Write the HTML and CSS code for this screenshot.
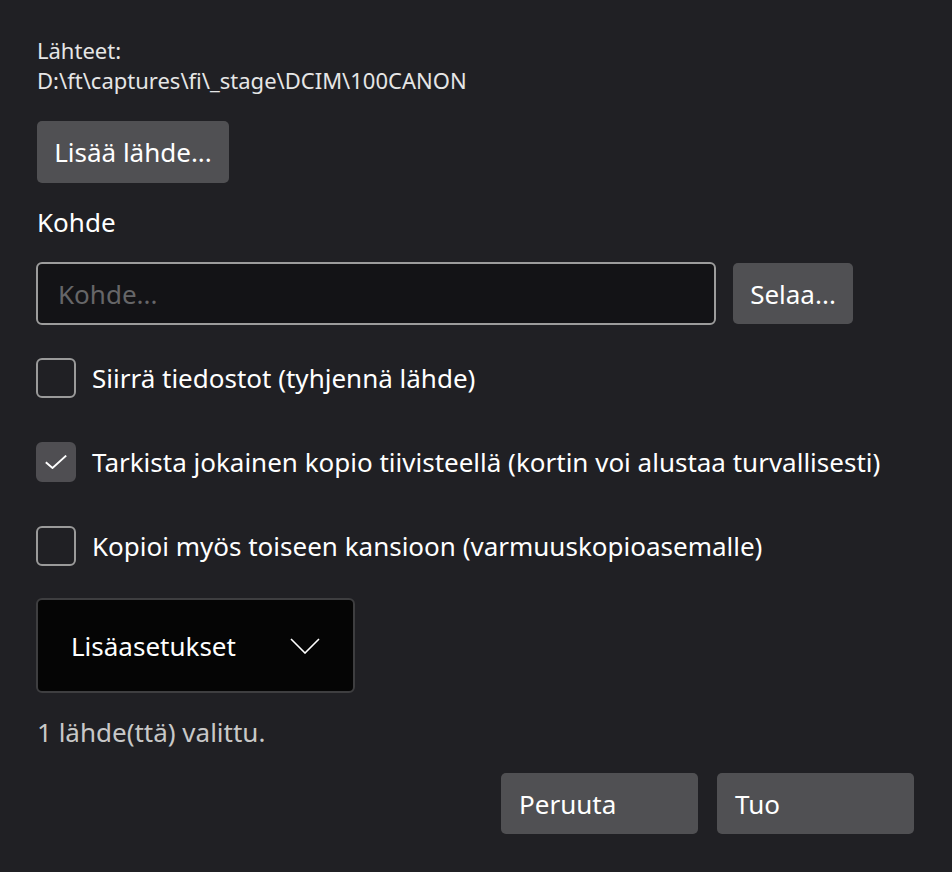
FILE: index.html
```html
<!DOCTYPE html>
<html lang="fi">
<head>
    <meta charset="UTF-8">
    <meta name="viewport" content="width=device-width, initial-scale=1.0">
    <title>Tuo kuvia</title>
    <link rel="stylesheet" href="styles.css">
</head>
<body>
    <div class="dialog">
        <div class="sources">
            <div>Lähteet:</div>
            <div>D:\ft\captures\fi\_stage\DCIM\100CANON</div>
        </div>

        <button type="button" class="btn add-source">Lisää lähde...</button>

        <label class="field-label" for="target">Kohde</label>
        <div class="target-row">
            <input type="text" id="target" class="target-input" placeholder="Kohde...">
            <button type="button" class="btn browse">Selaa...</button>
        </div>

        <label class="check">
            <span class="box"></span>
            <span>Siirrä tiedostot (tyhjennä lähde)</span>
        </label>
        <label class="check">
            <span class="box checked">
                <svg width="22" height="14" viewBox="0 0 22 14"><path d="M0.8 7.2 L7.5 13 L21.2 0.6" fill="none" stroke="#fff" stroke-width="1.9"/></svg>
            </span>
            <span>Tarkista jokainen kopio tiivisteellä (kortin voi alustaa turvallisesti)</span>
        </label>
        <label class="check">
            <span class="box"></span>
            <span>Kopioi myös toiseen kansioon (varmuuskopioasemalle)</span>
        </label>

        <div class="expander">
            <span>Lisäasetukset</span>
            <svg width="30" height="16" viewBox="0 0 30 16"><path d="M1 1 L15 15 L29 1" fill="none" stroke="#fff" stroke-width="1.6"/></svg>
        </div>

        <div class="status">1 lähde(ttä) valittu.</div>

        <div class="actions">
            <button type="button" class="btn action">Peruuta</button>
            <button type="button" class="btn action">Tuo</button>
        </div>
    </div>
</body>
</html>
```

FILE: styles.css
```css
body {
    margin: 0;
    background-color: #202024;
    color: #ffffff;
    font-family: 'Noto Sans', 'Open Sans', sans-serif;
}

.dialog {
    padding: 35px 38px 0 36px;
    display: flex;
    flex-direction: column;
    align-items: flex-start;
}

.sources {
    font-size: 22px;
    line-height: 30px;
    color: #e6e6e6;
    padding-left: 1px;
}

.btn {
    font-family: inherit;
    background-color: #505053;
    color: #ffffff;
    border: none;
    border-radius: 5px;
    font-size: 26px;
    cursor: pointer;
}

.add-source {
    margin-top: 26px;
    margin-left: 1px;
    height: 62px;
    width: 192px;
}

.field-label {
    margin-top: 23px;
    margin-left: 1px;
    font-size: 26px;
    line-height: 32px;
}

.target-row {
    margin-top: 24px;
    display: flex;
    align-items: center;
    gap: 17px;
}

.target-input {
    box-sizing: border-box;
    width: 680px;
    height: 63px;
    padding: 0 20px;
    background-color: #131316;
    border: 2px solid #9c9c9c;
    border-radius: 6px;
    color: #ffffff;
    font-family: inherit;
    font-size: 26px;
}

.target-input::placeholder {
    color: #666668;
}

.browse {
    width: 120px;
    height: 61px;
}

.check {
    display: flex;
    align-items: center;
    gap: 16px;
    font-size: 26px;
    margin-top: 33px;
}

.check + .check {
    margin-top: 44px;
}

.box {
    box-sizing: border-box;
    width: 40px;
    height: 40px;
    border: 2px solid #9a9a9a;
    border-radius: 6px;
    display: flex;
    align-items: center;
    justify-content: center;
}

.box.checked {
    background-color: #4f4e52;
    border-color: #4f4e52;
}

.expander {
    box-sizing: border-box;
    margin-top: 32px;
    width: 319px;
    height: 95px;
    padding: 0 33px;
    background-color: #050505;
    border: 2px solid #3e3e40;
    border-radius: 6px;
    display: flex;
    align-items: center;
    justify-content: space-between;
    font-size: 26px;
}

.status {
    margin-top: 21px;
    margin-left: 1px;
    font-size: 26px;
    line-height: 36px;
    color: #c8c8c8;
}

.actions {
    align-self: flex-end;
    margin-top: 23px;
    display: flex;
    gap: 19px;
}

.action {
    width: 197px;
    height: 61px;
    text-align: left;
    padding: 0 18px;
}
```
